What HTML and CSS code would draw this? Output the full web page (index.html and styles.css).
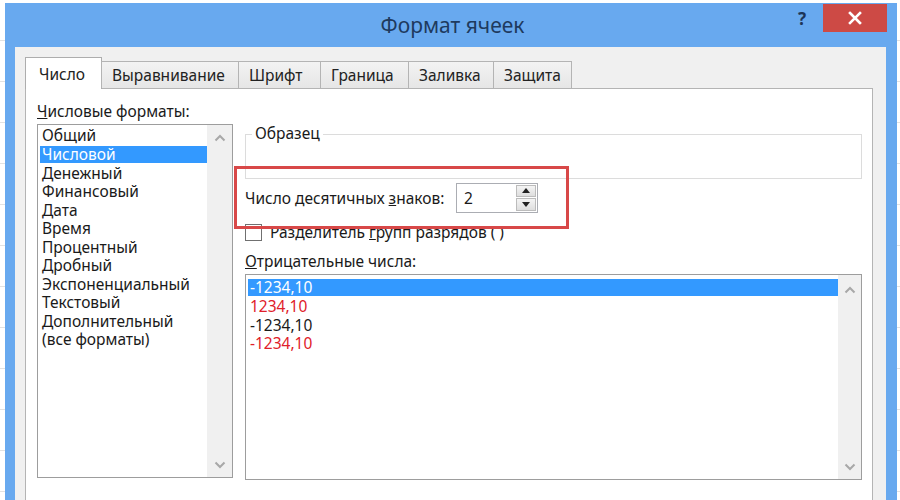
FILE: index.html
```html
<!DOCTYPE html>
<html lang="ru">
<head>
    <meta charset="UTF-8">
    <title>Формат ячеек</title>
    <link rel="stylesheet" href="styles.css">
</head>
<body>
    <div class="window">
        <div class="title-bar">
            <div class="title">Формат ячеек</div>
            <div class="help">?</div>
            <div class="close">
                <svg width="14" height="14" viewBox="0 0 14 14">
                    <path d="M2 2 L12 12 M12 2 L2 12" stroke="#fff" stroke-width="2.6" stroke-linecap="square"/>
                </svg>
            </div>
        </div>

        <div class="client">
            <div class="tabs">
                <div class="tab active">Число</div>
                <div class="tab">Выравнивание</div>
                <div class="tab">Шрифт</div>
                <div class="tab">Граница</div>
                <div class="tab">Заливка</div>
                <div class="tab">Защита</div>
            </div>

            <div class="panel">
                <div class="col-left">
                    <div class="label"><u>Ч</u>исловые форматы:</div>
                    <div class="listbox formats">
                        <ul class="items">
                            <li>Общий</li>
                            <li class="selected">Числовой</li>
                            <li>Денежный</li>
                            <li>Финансовый</li>
                            <li>Дата</li>
                            <li>Время</li>
                            <li>Процентный</li>
                            <li>Дробный</li>
                            <li>Экспоненциальный</li>
                            <li>Текстовый</li>
                            <li>Дополнительный</li>
                            <li>(все форматы)</li>
                        </ul>
                        <div class="scrollbar">
                            <svg width="12" height="8" viewBox="0 0 12 8"><path d="M1.5 6.5 L6 2 L10.5 6.5" fill="none" stroke="#a8a8a8" stroke-width="2"/></svg>
                            <svg width="12" height="8" viewBox="0 0 12 8"><path d="M1.5 1.5 L6 6 L10.5 1.5" fill="none" stroke="#a8a8a8" stroke-width="2"/></svg>
                        </div>
                    </div>
                </div>

                <div class="col-right">
                    <div class="sample">
                        <span class="legend">Образец</span>
                    </div>

                    <div class="decimals">
                        <span>Число десятичных <u>з</u>наков:</span>
                        <div class="spinner">
                            <span class="spin-value">2</span>
                            <div class="spin-buttons">
                                <div class="spin-btn">
                                    <svg width="8" height="5" viewBox="0 0 8 5"><path d="M0 5 L4 0 L8 5 Z" fill="#222"/></svg>
                                </div>
                                <div class="spin-btn">
                                    <svg width="8" height="5" viewBox="0 0 8 5"><path d="M0 0 L4 5 L8 0 Z" fill="#222"/></svg>
                                </div>
                            </div>
                        </div>
                    </div>

                    <div class="check-row">
                        <span class="checkbox"></span>
                        <span>Разделитель <u>г</u>рупп разрядов ( )</span>
                    </div>

                    <div class="label"><u>О</u>трицательные числа:</div>
                    <div class="listbox negatives">
                        <ul class="items">
                            <li class="selected">-1234,10</li>
                            <li class="red">1234,10</li>
                            <li>-1234,10</li>
                            <li class="red">-1234,10</li>
                        </ul>
                        <div class="scrollbar">
                            <svg width="12" height="8" viewBox="0 0 12 8"><path d="M1.5 6.5 L6 2 L10.5 6.5" fill="none" stroke="#a8a8a8" stroke-width="2"/></svg>
                            <svg width="12" height="8" viewBox="0 0 12 8"><path d="M1.5 1.5 L6 6 L10.5 1.5" fill="none" stroke="#a8a8a8" stroke-width="2"/></svg>
                        </div>
                    </div>
                </div>

                <div class="highlight"></div>
            </div>
        </div>
    </div>
</body>
</html>
```

FILE: styles.css
```css
:root {
    --frame: #68a9ef;
    --face: #f0f0f0;
    --border: #9d9d9d;
    --select: #3399ff;
    --text: #1a1a1a;
    --red: #e0202a;
}

* {
    margin: 0;
    padding: 0;
    box-sizing: border-box;
}

body {
    width: 900px;
    height: 500px;
    overflow: hidden;
    font-family: "Noto Sans", "Open Sans", sans-serif;
    font-size: 15.5px;
    color: var(--text);
    background-color: #fff;
    background-image: repeating-linear-gradient(to bottom, transparent 0, transparent 40px, #e2e2e2 40px, #e2e2e2 41px);
    padding: 3px 3px 0 5px;
}

.window {
    background-color: var(--frame);
    height: 497px;
    padding: 0 11px 0 10px;
    display: flex;
    flex-direction: column;
}

.title-bar {
    position: relative;
    height: 44px;
    flex-shrink: 0;
    display: flex;
    align-items: center;
    justify-content: center;
}

.title {
    font-size: 21px;
    color: #1e3a5e;
    margin-left: 4px;
}

.help {
    position: absolute;
    right: 80px;
    top: 4px;
    font-size: 17px;
    font-weight: 700;
    color: #1d3557;
}

.close {
    position: absolute;
    right: -1px;
    top: 1px;
    width: 64px;
    height: 28px;
    background-color: #cd4a45;
    display: flex;
    align-items: center;
    justify-content: center;
}

.client {
    flex: 1;
    background-color: var(--face);
    padding: 10px 13px 0 10px;
    display: flex;
    flex-direction: column;
}

.tabs {
    display: flex;
    align-items: flex-end;
    height: 31px;
    flex-shrink: 0;
    position: relative;
    z-index: 1;
}

.tab {
    height: 27px;
    padding: 0 10px;
    display: flex;
    align-items: center;
    background: linear-gradient(#f3f3f3, #e6e6e6);
    border: 1px solid #b4b4b4;
    border-bottom: none;
    margin-left: -1px;
    color: #222;
    white-space: nowrap;
}

.tab:nth-child(1) { width: 77px; padding-left: 13px; }
.tab:nth-child(2) { width: 138px; }
.tab:nth-child(3) { width: 83px; }
.tab:nth-child(4) { width: 89px; }
.tab:nth-child(5) { width: 86px; }
.tab:nth-child(6) { width: 79px; }

.tab.active {
    height: 32px;
    margin-left: 0;
    margin-bottom: -1px;
    background: #fff;
    border-color: #adadad;
}

.panel {
    flex: 1;
    position: relative;
    background-color: #fff;
    border: 1px solid #b4b4b4;
    border-bottom: none;
    display: flex;
    gap: 12px;
    padding: 13px 10px 0 11px;
}

.col-left {
    width: 196px;
    display: flex;
    flex-direction: column;
}

.col-right {
    width: 617px;
    display: flex;
    flex-direction: column;
}

.label {
    line-height: 18px;
    height: 22px;
    white-space: nowrap;
}

.listbox {
    border: 1px solid var(--border);
    display: flex;
    background-color: #fff;
}

.formats {
    height: 354px;
}

.negatives {
    height: 206px;
}

.items {
    list-style: none;
    flex: 1;
    padding: 3px 0 0 2px;
}

.items li {
    line-height: 18.5px;
    padding-left: 2px;
    white-space: nowrap;
}

.items li.selected {
    background-color: var(--select);
    color: #fff;
    line-height: 17px;
    margin: 1px 0;
}

.items li.red {
    color: var(--red);
}

.scrollbar {
    width: 25px;
    background-color: var(--face);
    display: flex;
    flex-direction: column;
    justify-content: space-between;
    align-items: center;
    padding: 9px 0 8px;
}

.formats .items {
    padding-top: 1px;
}

.negatives .scrollbar {
    width: 23px;
    padding-top: 11px;
}

.sample {
    position: relative;
    margin-top: 32px;
    height: 45px;
    border: 1px solid #dcdcdc;
}

.legend {
    position: absolute;
    top: -11px;
    left: 6px;
    padding: 0 3px;
    background-color: #fff;
    line-height: 18px;
}

.decimals {
    display: flex;
    align-items: center;
    margin-top: 3px;
    height: 31px;
}

.decimals > span {
    width: 211px;
    white-space: nowrap;
}

.spinner {
    width: 82px;
    height: 30px;
    border: 1px solid #abadb3;
    display: flex;
    justify-content: space-between;
    padding: 1px;
}

.spin-value {
    padding-left: 6px;
    line-height: 26px;
}

.spin-buttons {
    width: 20px;
    display: flex;
    flex-direction: column;
    gap: 1px;
}

.spin-btn {
    flex: 1;
    background: linear-gradient(#f4f4f4, #dedede);
    border: 1px solid #bcbcbc;
    display: flex;
    align-items: center;
    justify-content: center;
}

.check-row {
    display: flex;
    align-items: center;
    gap: 8px;
    margin-top: 9px;
    height: 20px;
}

.checkbox {
    width: 17px;
    height: 17px;
    border: 1px solid #707070;
    background-color: #fff;
}

.col-right .label {
    margin-top: 10px;
    height: 22px;
}

.highlight {
    position: absolute;
    left: 208px;
    top: 77px;
    width: 335px;
    height: 63px;
    border: 3px solid #d84848;
    pointer-events: none;
}
```
